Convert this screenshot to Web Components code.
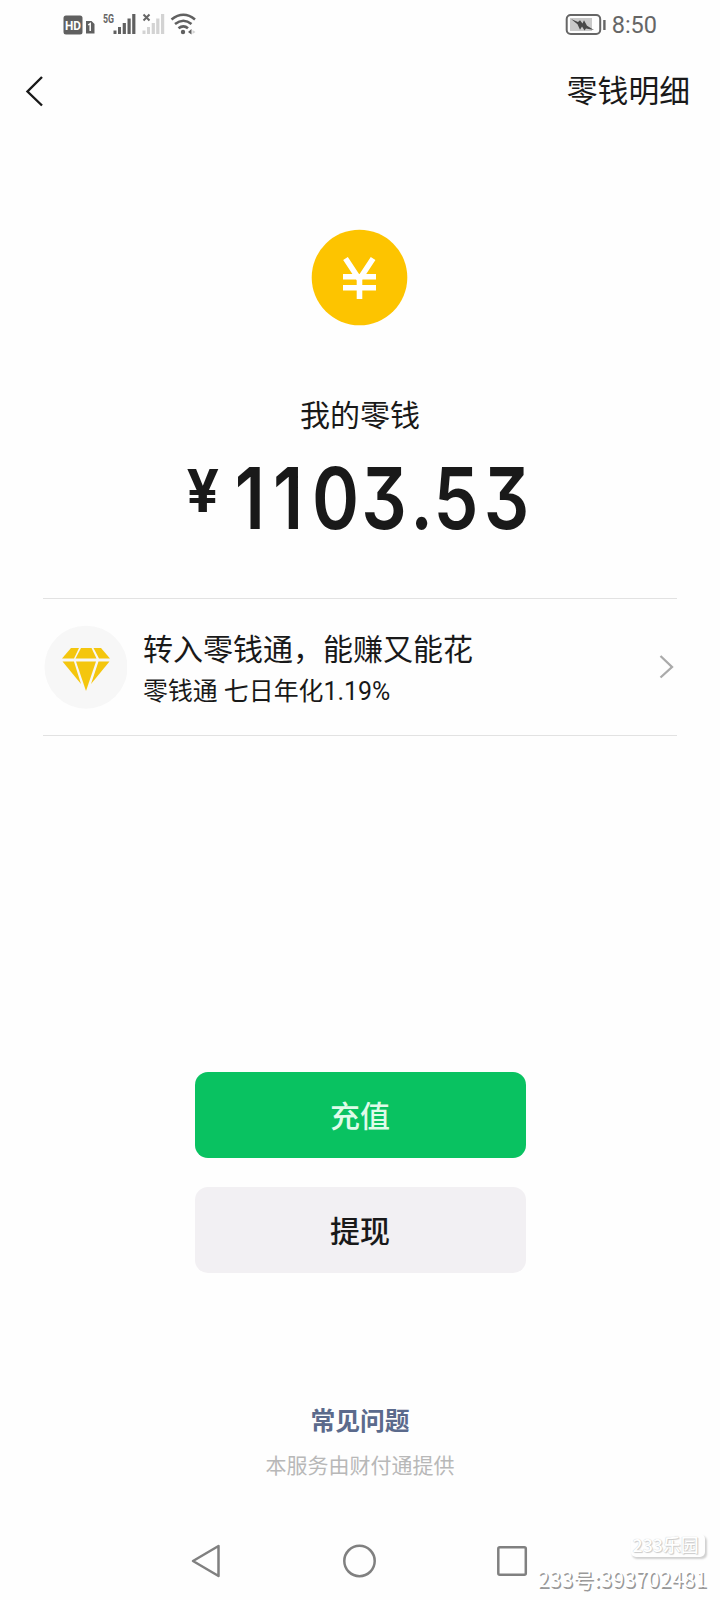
<!DOCTYPE html>
<html lang="zh-CN">
<head>
<meta charset="utf-8">
<title>我的零钱</title>
<style>
html,body{margin:0;padding:0}
body{width:720px;height:1600px;overflow:hidden;background:#fefefe;color:#191919;font-family:Roboto,"Noto Sans CJK SC",sans-serif}
</style>
</head>
<body>
<wallet-page></wallet-page>
<script>
const define = (name, html) => {
  const t = document.createElement('template');
  t.innerHTML = html;
  customElements.define(name, class extends HTMLElement {
    constructor() {
      super();
      this.attachShadow({mode: 'open'}).appendChild(t.content.cloneNode(true));
    }
  });
};

define('status-bar', `
<style>
:host{display:flex;height:50px;box-sizing:border-box;padding:0 63px 0 62px;justify-content:space-between;align-items:center;color:#666}
svg{display:block}
.right{display:flex;align-items:center;gap:6px;font-size:23.500px;line-height:50px}
</style>
<svg width="136" height="50" viewBox="62 0 136 50">
  <rect x="63.5" y="15.500" width="19" height="19" rx="2.500" fill="#606060"/>
  <text x="65" y="29.500" font-family="Roboto" font-size="12.500" font-weight="700" fill="#fff" textLength="16" lengthAdjust="spacingAndGlyphs">HD</text>
  <path d="M86 21h5.500l3 3v9.500h-8.500z" fill="#606060"/>
  <path d="M88.200 25l2-1.400v7.400" fill="none" stroke="#fff" stroke-width="1.500"/>
  <text x="103" y="23" font-family="Roboto" font-size="12" font-weight="700" fill="#666" textLength="11" lengthAdjust="spacingAndGlyphs">5G</text>
  <g fill="#606060"><rect x="113.500" y="30.500" width="3" height="3.500"/><rect x="118" y="27" width="3" height="7"/><rect x="122.700" y="23" width="3.200" height="11"/><rect x="127.500" y="18.500" width="3.200" height="15.500"/><rect x="132.200" y="14" width="3.200" height="20"/></g>
  <path d="M143.500 14.500l6 6m0-6l-6 6" stroke="#666" stroke-width="2"/>
  <g fill="#d3d3d3"><rect x="142.500" y="30.500" width="3" height="3.500"/><rect x="147" y="27" width="3" height="7"/><rect x="151.700" y="23" width="3.200" height="11"/><rect x="156.200" y="18.500" width="3.200" height="15.500"/><rect x="161" y="14" width="3.200" height="20"/></g>
  <g fill="none" stroke="#606060" stroke-width="2.600"><path d="M171.500 19.500q12-9.500 23.500 0"/><path d="M175 24q8.500-6.500 16.500 0"/><path d="M178.500 28.300q5-4 9.500 0"/></g>
  <circle cx="183" cy="32" r="2.200" fill="#606060"/><path d="M188 32l3.500-3v5.500z" fill="#606060"/><path d="M192.500 30l3 2-3 2z" fill="#d3d3d3"/>
</svg>
<div class="right">
<svg width="41" height="50" viewBox="565 0 41 50">
  <rect x="566.700" y="15" width="33.500" height="19" rx="4" fill="none" stroke="#666" stroke-width="2"/>
  <rect x="570" y="18" width="22" height="13" fill="#c9c9c9"/>
  <path d="M571 19l7 3 2-1.800 2.500 3.300 1.500-3.300 3 5.500 7 4.300-8-1.500-1.500 2-2.500-4-2 3.300-2.500-5.500z" fill="#484848"/>
  <rect x="603.200" y="20" width="2.400" height="10" fill="#666"/>
</svg><span>8:50</span></div>`);

define('nav-bar', `
<style>
:host{display:flex;height:82px;box-sizing:border-box;padding:0 30px 0 24px;justify-content:space-between;align-items:center;font-size:30.800px;line-height:82px}
svg{display:block}
.title{padding-top:2px}
</style>
<svg width="22" height="36" viewBox="24 73 22 36"><path d="M42 77L27.500 91.500 42 105.500" fill="none" stroke="#191919" stroke-width="2.400"/></svg>
<div class="title"><slot></slot></div>`);

define('balance-view', `
<style>
:host{display:flex;flex-direction:column;align-items:center;height:466px;box-sizing:border-box;padding-top:97px}
svg{display:block;overflow:visible}
.label{font-size:30px;line-height:44px;margin-top:67px}
.sum{margin-top:3px}
</style>
<svg width="98" height="98" viewBox="311 229 98 98">
 <circle cx="359.500" cy="277.500" r="47.800" fill="#fdc400"/>
 <path d="M345.500 258.500l13.800 21 13.800-21M343 276.700h33M343 287.800h33M359.500 277v22" fill="none" stroke="#fff" stroke-width="5.600"/>
</svg>
<div class="label"><slot></slot></div>
<svg class="sum" width="360" height="120" viewBox="180 441 360 120" fill="#191919" font-family="Inter">
 <text font-size="59" font-weight="700" transform="translate(186.500 511.500) scale(.97 1)">¥</text>
 <text font-size="85" font-weight="600" transform="translate(0 529) scale(.84 1)" style="font-feature-settings:'cv09' 1" x="279.500 325 371.500 430 488.500 516 576">1103.53</text>
</svg>`);

define('gem-icon', `
<style>:host{display:block;width:84px;height:84px}svg{display:block}</style>
<svg width="84" height="84" viewBox="43 625 84 84">
<circle cx="86" cy="667.200" r="41.500" fill="#f7f7f7"/>
<g fill="#f4c60e"><path d="M71 648h8l-5 10.500H62z"/><path d="M81 648h10.500l5 10.500h-21z"/><path d="M93.500 648h7.500l9 10.500h-11z"/><path d="M62.500 661.500H74L81 684z"/><path d="M76 661.500h20L86 691z"/><path d="M98.500 661.500h11L91 684z"/></g>
</svg>`);

define('promo-row', `
<style>
:host{display:flex;align-items:center;height:138px;box-sizing:border-box;margin:0 43px;border-top:1px solid #e2e2e2;border-bottom:1px solid #e2e2e2}
.text{flex:1;margin-left:16px;padding-top:6px;display:flex;flex-direction:column}
.title{font-size:30px;line-height:42px}
.sub{font-size:24.900px;line-height:41px}
svg{display:block;margin-right:2px}
</style>
<gem-icon></gem-icon>
<div class="text"><div class="title"><slot name="title"></slot></div><div class="sub"><slot name="sub"></slot></div></div>
<svg width="16" height="28" viewBox="659 653 16 28"><path d="M660.500 656l11.500 11-11.500 10.500" fill="none" stroke="#aaa" stroke-width="2.300"/></svg>`);

define('action-button', `
<style>
:host{display:flex;align-items:center;justify-content:center;width:331px;height:86px;box-sizing:border-box;border-radius:13px;font-size:30px;font-weight:500;background:#f2f0f3;padding-bottom:2px}
:host([primary]){background:#09c261;color:#dffbe9}
</style><slot></slot>`);

define('page-footer', `
<style>
:host{display:flex;flex-direction:column;align-items:center}
.help{font-size:24.800px;line-height:40px;font-weight:700;color:#5b6a8c}
.by{font-size:21px;line-height:32px;margin-top:8px;color:#b8b8b8}
</style>
<div class="help"><slot name="help"></slot></div><div class="by"><slot name="by"></slot></div>`);

define('system-nav', `
<style>
:host{display:flex;height:40px;justify-content:space-between;padding:0 192px 0 191px}
svg{display:block}
</style>
<svg width="30" height="40" viewBox="191 1541 30 40"><path d="M193 1561L218.500 1546V1576z" fill="none" stroke="#808080" stroke-width="2.500" stroke-linejoin="round"/></svg>
<svg width="34" height="40" viewBox="342.500 1541 34 40"><circle cx="360" cy="1561" r="15.200" fill="none" stroke="#808080" stroke-width="2.500"/></svg>
<svg width="32" height="40" viewBox="496 1541 32 40"><rect x="498.300" y="1547.300" width="27.500" height="27.500" rx="1.500" fill="none" stroke="#808080" stroke-width="2.500"/></svg>`);

define('water-mark', `
<style>
:host{position:absolute;right:13px;bottom:7px;display:flex;flex-direction:column;align-items:flex-end;color:#fff;font-family:"Noto Sans CJK SC",sans-serif;white-space:nowrap}
.badge{width:74px;height:23px;border-radius:5px;box-sizing:border-box;padding-right:5px;display:flex;justify-content:center;font-size:17.800px;line-height:21px;font-weight:500;margin-right:2px;box-shadow:1.500px 2px 2px #d0d0d0;text-shadow:0 0 1px #bbb,1px 1px 1px #ccc}
.id{font-size:21px;letter-spacing:.2px;line-height:30px;margin-top:6px;text-shadow:1.500px 1.500px .5px #999}
</style>
<div class="badge"><slot name="brand"></slot></div><div class="id"><slot name="id"></slot></div>`);

define('wallet-page', `
<style>
:host{display:flex;flex-direction:column;position:relative;width:720px;height:1600px}
.actions{display:flex;flex-direction:column;align-items:center;gap:29px;margin-top:336px}
page-footer{margin-top:129px}
system-nav{margin-top:auto;margin-bottom:19px}
</style>
<status-bar></status-bar>
<nav-bar>零钱明细</nav-bar>
<balance-view>我的零钱</balance-view>
<promo-row><span slot="title">转入零钱通，能赚又能花</span><span slot="sub">零钱通 七日年化1.19%</span></promo-row>
<div class="actions"><action-button primary>充值</action-button><action-button>提现</action-button></div>
<page-footer><span slot="help">常见问题</span><span slot="by">本服务由财付通提供</span></page-footer>
<system-nav></system-nav>
<water-mark><span slot="brand">233乐园</span><span slot="id">233号:393702481</span></water-mark>`);
</script>
</body>
</html>
